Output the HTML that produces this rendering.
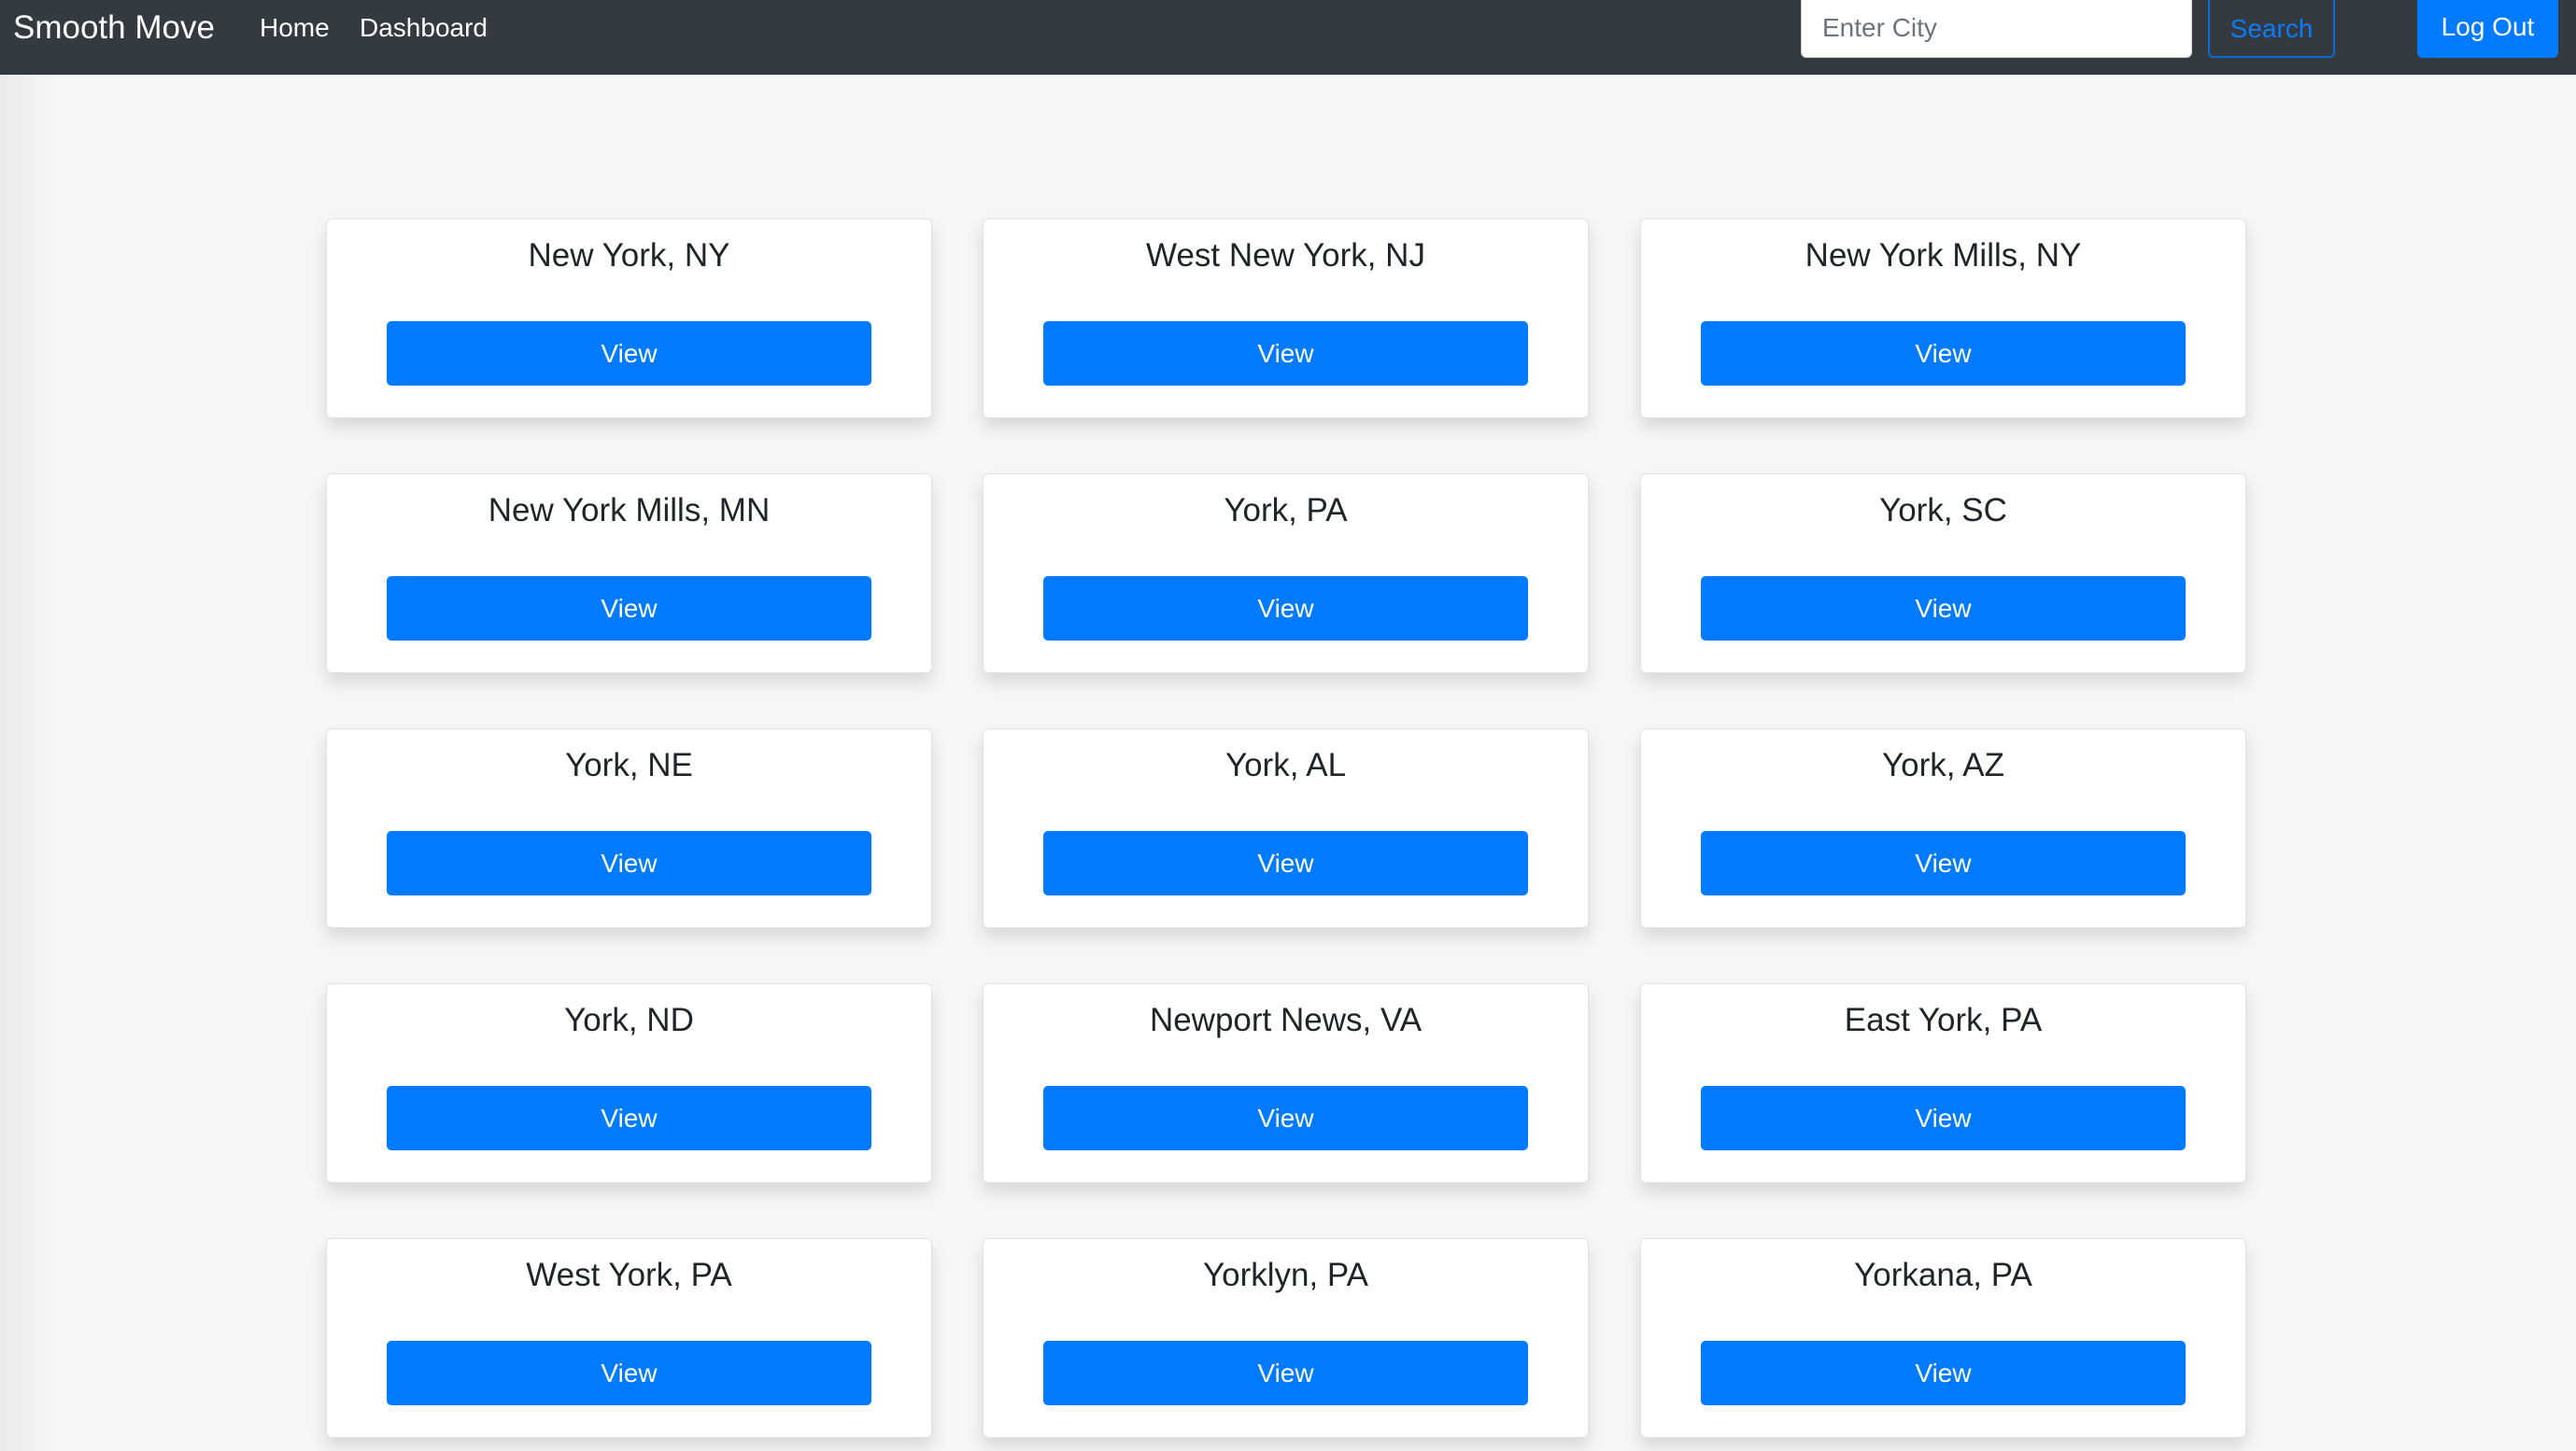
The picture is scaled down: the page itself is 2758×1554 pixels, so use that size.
<!DOCTYPE html>
<html><head><meta charset="utf-8"><style>
*{box-sizing:border-box;margin:0;padding:0}
body{width:2758px;height:1554px;overflow:hidden;background:#f6f6f6;font-family:"Liberation Sans",Arial,sans-serif;position:relative}
.shade{position:absolute;left:0;top:80px;width:60px;height:1474px;background:linear-gradient(to right,#ebebeb,#f6f6f6)}
nav{position:absolute;left:0;top:0;width:2758px;height:80px;background:#343a40;color:#fff}
nav .t{position:absolute;top:10px;line-height:40px}
.brand{left:14px;font-size:35px}
.lnk{font-size:28px}
.inp{position:absolute;left:1928px;top:-6px;width:419px;height:68px;background:#fff;border-radius:6px;border:1px solid #ccc;font-size:28px;color:#6c757d;padding:19px 0 0 22px}
.srch{position:absolute;left:2364px;top:-6px;width:136px;height:68px;border:2px solid #0a6ad8;border-radius:6px;color:#0a7bff;font-size:28px;text-align:center;padding-top:19px}
.lo{position:absolute;left:2588px;top:-6px;width:151px;height:68px;background:#007bff;border-radius:6px;color:#fff;font-size:28px;text-align:center;padding-top:19px}
.card{position:absolute;width:649px;height:214px;background:#fff;border:1px solid #e2e2e2;border-radius:6px;box-shadow:0 10px 18px rgba(0,0,0,0.12)}
.card h5{position:absolute;left:0;right:0;top:18px;text-align:center;font-weight:normal;font-size:35px;color:#212529;line-height:42px}
.card .b{position:absolute;left:64px;top:109px;width:519px;height:69px;background:#007bff;border-radius:5px;color:#fff;font-size:28px;text-align:center;line-height:69px}
</style></head><body>
<div class="shade"></div>
<nav>
<div class="t brand">Smooth Move</div>
<div class="t lnk" style="left:278px">Home</div>
<div class="t lnk" style="left:385px">Dashboard</div>
<div class="inp">Enter City</div>
<div class="srch">Search</div>
<div class="lo">Log Out</div>
</nav>
<div class="card" style="left:349px;top:234px"><h5>New York, NY</h5><div class="b">View</div></div>
<div class="card" style="left:1052px;top:234px"><h5>West New York, NJ</h5><div class="b">View</div></div>
<div class="card" style="left:1756px;top:234px"><h5>New York Mills, NY</h5><div class="b">View</div></div>
<div class="card" style="left:349px;top:507px"><h5>New York Mills, MN</h5><div class="b">View</div></div>
<div class="card" style="left:1052px;top:507px"><h5>York, PA</h5><div class="b">View</div></div>
<div class="card" style="left:1756px;top:507px"><h5>York, SC</h5><div class="b">View</div></div>
<div class="card" style="left:349px;top:780px"><h5>York, NE</h5><div class="b">View</div></div>
<div class="card" style="left:1052px;top:780px"><h5>York, AL</h5><div class="b">View</div></div>
<div class="card" style="left:1756px;top:780px"><h5>York, AZ</h5><div class="b">View</div></div>
<div class="card" style="left:349px;top:1053px"><h5>York, ND</h5><div class="b">View</div></div>
<div class="card" style="left:1052px;top:1053px"><h5>Newport News, VA</h5><div class="b">View</div></div>
<div class="card" style="left:1756px;top:1053px"><h5>East York, PA</h5><div class="b">View</div></div>
<div class="card" style="left:349px;top:1326px"><h5>West York, PA</h5><div class="b">View</div></div>
<div class="card" style="left:1052px;top:1326px"><h5>Yorklyn, PA</h5><div class="b">View</div></div>
<div class="card" style="left:1756px;top:1326px"><h5>Yorkana, PA</h5><div class="b">View</div></div>
</body></html>
